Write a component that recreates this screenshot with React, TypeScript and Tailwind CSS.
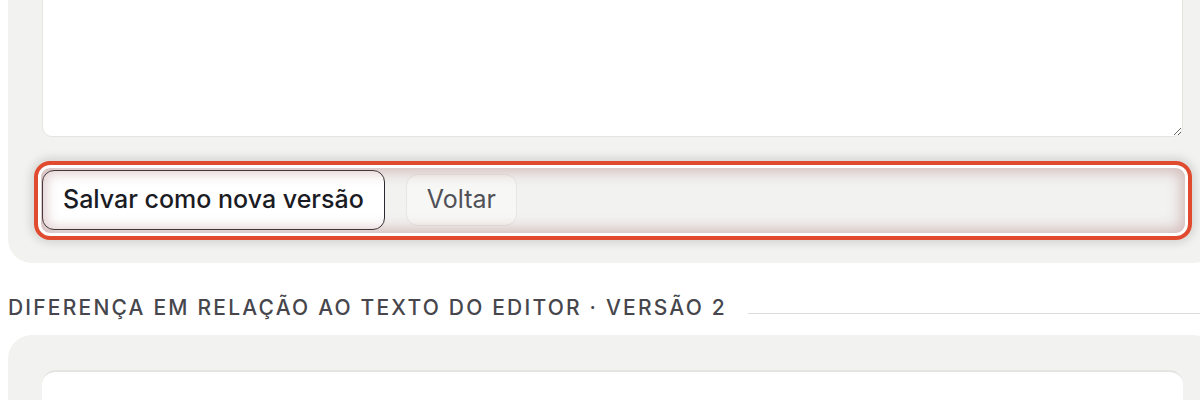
import React from "react";

export default function App() {
  return (
    <div
      className="w-[1200px] h-[400px] overflow-hidden bg-white"
      style={{ fontFamily: "Inter, 'Noto Sans', sans-serif" }}
    >
      <div className="ml-[8px] w-[1209px] mt-[-197px]">
        {/* Top panel */}
        <div className="bg-[#f2f2f0] rounded-[24px] px-[34px] pt-[34px] pb-[33px]">
          <textarea
            className="block w-full h-[300px] bg-white border border-[#e4e4e1] rounded-[10px] outline-none resize-y"
            defaultValue=""
          />
          <div className="relative mt-[33px] flex items-center gap-[21px] h-[60px]">
            <button className="h-[60px] px-[20px] rounded-[12px] border border-[#2a2a2e] bg-white text-[25px] font-medium text-[#1b1b24] whitespace-nowrap">
              Salvar como nova versão
            </button>
            <button className="h-[52px] px-[20px] rounded-[12px] border border-[#e6e6e3] bg-[#f7f7f5] text-[25px] text-[#505057]">
              Voltar
            </button>
            <div className="pointer-events-none absolute -top-[9px] -bottom-[10px] -left-[8px] -right-[9px] rounded-[16px] border-[4px] border-[#e04a2f] shadow-[0_0_10px_3px_rgba(0,0,0,0.13),inset_0_0_0_3px_#ffffff,inset_0_0_14px_7px_rgba(160,100,100,0.38)]" />
          </div>
        </div>

        {/* Heading */}
        <div className="flex items-end gap-[21px] mt-[32px] h-[26px]">
          <div className="text-[21px] leading-[26px] font-medium tracking-[2.2px] text-[#46464c] whitespace-nowrap">
            DIFERENÇA EM RELAÇÃO AO TEXTO DO EDITOR · VERSÃO 2
          </div>
          <div className="flex-1 h-px bg-[#dcdcda] mb-[7px]" />
        </div>

        {/* Second panel */}
        <div className="mt-[14px] bg-[#f2f2f0] rounded-[24px] px-[34px] pt-[35px] pb-[34px]">
          <div className="bg-white border-t-2 border-[#e4e4e1] rounded-[14px] h-[200px] pt-[24px] pl-[33px] pr-[160px] flex justify-between text-[18px] font-medium text-[#2a2a32]">
            <span>versão 2</span>
            <span>editor</span>
          </div>
        </div>
      </div>
    </div>
  );
}
